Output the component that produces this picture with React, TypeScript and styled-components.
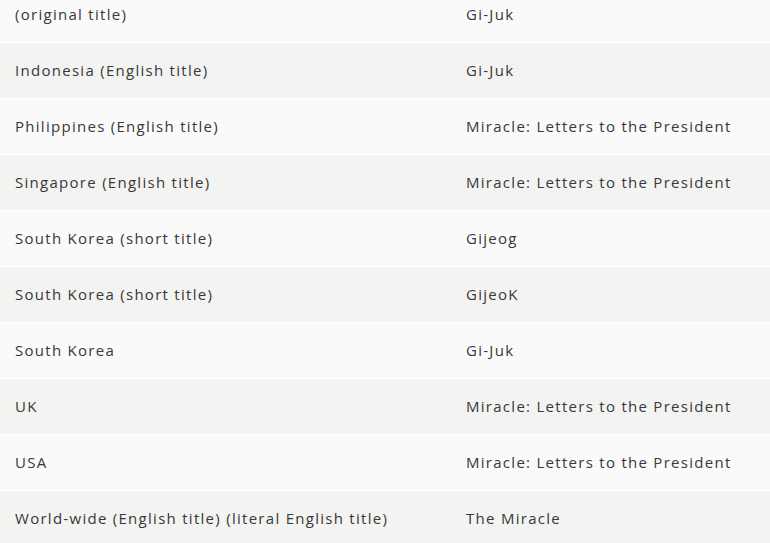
import React from "react";
import styled, { createGlobalStyle } from "styled-components";

const Global = createGlobalStyle`
  html, body { margin: 0; padding: 0; background: #ffffff; overflow: hidden; }
  body { font-family: "Open Sans", "Noto Sans", sans-serif; }
`;

const Page = styled.div`
  width: 770px;
  height: 543px;
  overflow: hidden;
  background: #ffffff;
`;

const Table = styled.div`
  display: flex;
  flex-direction: column;
  margin-top: -13px;
`;

const Row = styled.div<{ $shade: boolean }>`
  display: grid;
  grid-template-columns: 451px 1fr;
  align-items: center;
  height: 56px;
  box-sizing: border-box;
  background: ${(p) => (p.$shade ? "#f3f3f2" : "#fafafa")};
  border-bottom: 1px solid #ffffff;
`;

const Cell = styled.div`
  padding-left: 15px;
  padding-bottom: 1px;
  font-size: 15px;
  letter-spacing: 1.28px;
  color: #383838;
  white-space: nowrap;
`;

const rows: [string, string][] = [
  ["(original title)", "Gi-Juk"],
  ["Indonesia (English title)", "Gi-Juk"],
  ["Philippines (English title)", "Miracle: Letters to the President"],
  ["Singapore (English title)", "Miracle: Letters to the President"],
  ["South Korea (short title)", "Gijeog"],
  ["South Korea (short title)", "GijeoK"],
  ["South Korea", "Gi-Juk"],
  ["UK", "Miracle: Letters to the President"],
  ["USA", "Miracle: Letters to the President"],
  ["World-wide (English title) (literal English title)", "The Miracle"],
];

export default function App() {
  return (
    <Page>
      <Global />
      <Table>
        {rows.map(([a, b], i) => (
          <Row key={i} $shade={i % 2 === 1}>
            <Cell>{a}</Cell>
            <Cell>{b}</Cell>
          </Row>
        ))}
      </Table>
    </Page>
  );
}
